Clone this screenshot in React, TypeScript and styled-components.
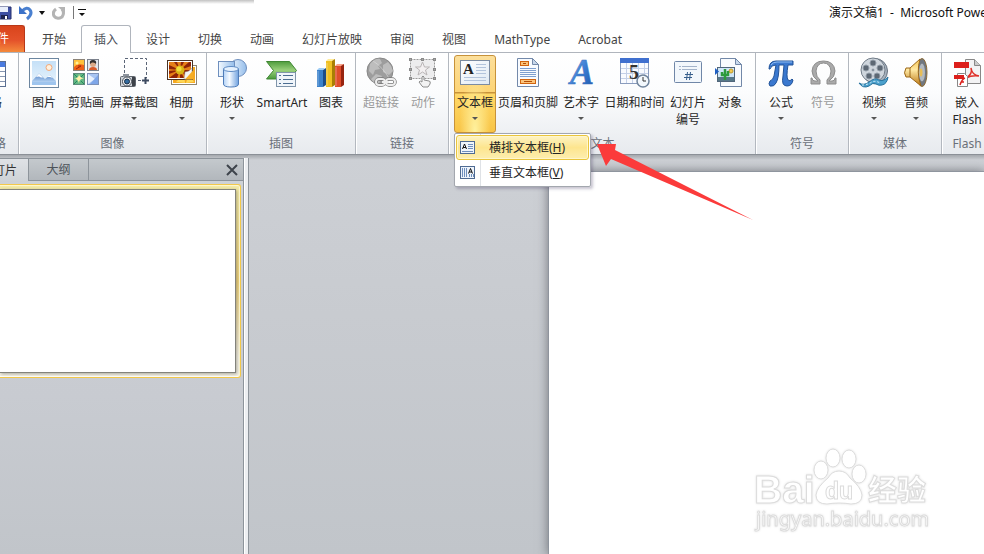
import React, { ReactNode } from "react";
import styled, { createGlobalStyle, css } from "styled-components";

const GlobalStyle = createGlobalStyle`
  * { box-sizing: border-box; }
  body {
    margin: 0;
    overflow: hidden;
    background: #fff;
    color: #262626;
    font-family: "Noto Sans", "Noto Sans CJK SC", sans-serif;
    font-size: 12px;
    line-height: 17px;
  }
  button {
    margin: 0;
    padding: 0;
    border: 0;
    background: none;
    color: inherit;
    font: inherit;
  }
  svg { display: block; flex: none; }
`;

const Window = styled.div`
  position: relative;
  display: flex;
  flex-direction: column;
  min-height: 100vh;
  overflow: hidden;
`;

/* ---------- title bar ---------- */

const TitleBar = styled.header`
  position: relative;
  display: flex;
  align-items: center;
  justify-content: space-between;
  height: 25px;
  background: #fff;
  overflow: hidden;
`;

const EdgeShade = styled.div`
  position: absolute;
  top: 0;
  left: 0;
  width: 254px;
  height: 4px;
  background: linear-gradient(#c2c2c2, #fff);
`;

const QuickAccess = styled.div`
  display: flex;
  align-items: center;
  height: 23px;
`;

const QuickButton = styled.button<{ $width: number }>`
  display: flex;
  justify-content: center;
  width: ${(p) => p.$width}px;
`;

const QuickDivider = styled.span`
  width: 1px;
  height: 13px;
  background: #777;
`;

const Title = styled.h1`
  flex: none;
  width: 155px;
  margin: 0;
  color: #111;
  font-size: 12px;
  font-weight: 400;
  white-space: pre;
`;

/* ---------- ribbon tabs ---------- */

const TabRow = styled.nav`
  display: flex;
  align-items: stretch;
  height: 28px;
  background: #fff;
  box-shadow: inset 0 -1px #b0b5bd;
`;

const FileTab = styled.button`
  width: 25px;
  margin-right: 3px;
  margin-bottom: 1px;
  padding-right: 15px;
  display: flex;
  justify-content: flex-end;
  border: 1px solid #b93818;
  border-left: 0;
  border-bottom: 0;
  border-radius: 0 3px 0 0;
  background: linear-gradient(#d9441c, #e4522a 55%, #f58a3c);
  color: #fff;
  line-height: 26px;
  white-space: nowrap;
`;

const RibbonTab = styled.button<{ $active?: boolean }>`
  flex: none;
  padding: 0 14px;
  color: #444;
  white-space: nowrap;
  ${(p) =>
    p.$active &&
    css`
      margin: 0 1px;
      padding: 0 12px;
      border: 1px solid #b0b5bd;
      border-bottom: 0;
      border-radius: 3px 3px 0 0;
      background: #fff;
      color: #4b4f58;
    `}
`;

/* ---------- ribbon body ---------- */

const Ribbon = styled.div`
  display: flex;
  height: 102px;
  border-bottom: 1px solid #8b9097;
  background: linear-gradient(#fff, #fbfcfd 40%, #e7eaee);
`;

const Group = styled.section<{ $indent?: number }>`
  flex: none;
  display: flex;
  flex-direction: column;
  justify-content: space-between;
  padding: 2px 4px;
  padding-left: ${(p) => p.$indent ?? 4}px;
  border-right: 1px solid #b3b8bf;
  box-shadow: 1px 0 #fff;
`;

const GroupItems = styled.div`
  display: flex;
  align-items: flex-start;
`;

const GroupName = styled.h2`
  margin: 0;
  color: #6a7079;
  font-size: 12px;
  font-weight: 400;
  text-align: center;
  white-space: nowrap;
`;

const ToolSlot = styled.div<{ $width: number }>`
  position: relative;
  flex: none;
  width: ${(p) => p.$width}px;
`;

const ToolButton = styled.button<{ $open?: boolean; $dim?: boolean }>`
  display: flex;
  flex-direction: column;
  align-items: center;
  width: 100%;
  height: 78px;
  padding-top: 2px;
  white-space: nowrap;
  color: ${(p) => (p.$dim ? "#9a9a9a" : "#262626")};
  ${(p) =>
    p.$open &&
    css`
      padding-top: 1px;
      border: 1px solid #c7923a;
      border-radius: 3px;
      background:
        radial-gradient(ellipse at 50% 100%, #fff2a0, transparent 55%),
        linear-gradient(#fcdf9b 0, #fdd475 36px, #c7923a 36px, #c7923a 37px, #ffd868 38px, #f8c445 100%);
    `}
`;

const ToolLabel = styled.span`
  display: block;
  margin-top: 5px;
  text-align: center;
  white-space: pre;
`;

const Caret = styled.span`
  margin-top: 6px;
  border: 3px solid transparent;
  border-top-color: #555;
  border-bottom: 0;
`;

/* ---------- drop-down menu ---------- */

const Menu = styled.div`
  position: absolute;
  z-index: 3;
  top: 78px;
  left: 0;
  width: 137px;
  padding: 1px;
  border: 1px solid #a3a7ae;
  border-radius: 2px;
  background: linear-gradient(90deg, #fff 25px, #dfe2e6 25px, #dfe2e6 26px, #fff 26px);
  box-shadow: 2px 2px 3px rgba(70, 60, 100, 0.3);
`;

const MenuItem = styled.button<{ $hot?: boolean }>`
  display: flex;
  align-items: center;
  gap: 13px;
  width: 100%;
  height: 25px;
  padding-left: 3px;
  border: 1px solid ${(p) => (p.$hot ? "#e9c53c" : "transparent")};
  border-radius: 3px;
  background: ${(p) =>
    p.$hot ? "linear-gradient(#fdf3c4, #fde58e 50%, #fdeeb0)" : "none"};
  box-shadow: ${(p) => (p.$hot ? "inset 0 0 0 1px #fff6cc" : "none")};
  white-space: nowrap;
`;

/* ---------- workspace ---------- */

const Workspace = styled.main`
  flex: 1;
  display: flex;
  align-items: stretch;
  background:
    linear-gradient(#a4a8ad, rgba(180, 184, 190, 0) 5px),
    linear-gradient(#cdd0d5, #c8cbd0 40%, #c1c5ca);
`;

const SlidePane = styled.aside`
  flex: none;
  width: 244px;
  margin-top: 3px;
  border: 1px solid #8d949b;
  border-left: 0;
  border-bottom: 0;
  background: linear-gradient(#cfd3d7, #c8cbd1 60%, #c1c5ca);
`;

const PaneTabs = styled.div`
  display: flex;
  height: 22px;
  border-bottom: 1px solid #8d949b;
  background: linear-gradient(#c4c9cd, #b2b7bc);
  color: #4d535a;
`;

const PaneTab = styled.button<{ $width: number; $active?: boolean }>`
  width: ${(p) => p.$width}px;
  border-right: 1px solid #8d949b;
  white-space: nowrap;
  ${(p) =>
    p.$active &&
    css`
      display: flex;
      align-items: center;
      justify-content: flex-end;
      margin-bottom: -1px;
      padding-right: 11px;
      background: linear-gradient(#dfe2e6, #cfd3d7);
      color: #333;
    `}
`;

const PaneClose = styled.button`
  margin-left: auto;
  width: 22px;
  display: flex;
  align-items: center;
  justify-content: center;
`;

const SelectedFrame = styled.div`
  margin: 3px 2px 0 0;
  padding: 4px 4px 4px 0;
  border: 1px solid #f3c94a;
  border-left: 0;
  border-radius: 0 3px 3px 0;
  background: linear-gradient(#f4eca8, #efd27a 50%, #f4f1e4 90%);
  box-shadow: inset -1px 0 #fdf6cf, inset 0 1px #fdf6cf, inset 0 -1px #fff;
`;

const Thumbnail = styled.div`
  height: 184px;
  border: 1px solid #83837c;
  border-left: 0;
  background: #fff;
  box-shadow: 1px 1px 3px rgba(80, 80, 70, 0.45);
`;

const Splitter = styled.div`
  flex: none;
  width: 5px;
  margin-top: 3px;
  border-right: 1px solid #8d949b;
  background: linear-gradient(90deg, #fff 1px, #eceef1 1px);
`;

const Canvas = styled.div`
  flex: 1;
  display: flex;
  padding: 17px 0 0 300px;
`;

const Slide = styled.div`
  flex: 1;
  background: #fff;
  box-shadow: 0 0 0 1px rgba(140, 146, 156, 0.8), 0 0 10px 1px rgba(60, 64, 70, 0.6);
`;

const PointerArrow = styled.svg`
  position: absolute;
  z-index: 4;
  left: 594px;
  top: 138px;
`;

const Watermark = styled.svg`
  position: absolute;
  right: 56px;
  bottom: 18px;
  filter: drop-shadow(0 0 1px rgba(0, 0, 0, 0.12));
`;

/* ---------- icons ---------- */

const Icon = ({ children, w = 32, h = 32 }: { children: ReactNode; w?: number; h?: number }) => (
  <svg width={w} height={h} viewBox={`0 0 ${w} ${h}`} aria-hidden="true">
    {children}
  </svg>
);

const TableIcon = () => (
  <Icon>
    <rect x="3.500" y="4.500" width="28" height="25" fill="#fff" stroke="#5b6f92" />
    <rect x="4" y="5" width="27" height="5" fill="#4a7be0" />
    <path d="M4 14.500h27M4 19.500h27M4 24.500h27M13.500 10v19M24.500 10v19" stroke="#8796b0" />
  </Icon>
);

const PictureIcon = () => (
  <Icon>
    <defs>
      <linearGradient id="picSky" x2="0" y2="1">
        <stop stopColor="#c5e0f7" />
        <stop offset="1" stopColor="#eaf5fd" />
      </linearGradient>
      <linearGradient id="picHill" x2="0" y2="1">
        <stop stopColor="#4d7fc4" />
        <stop offset="1" stopColor="#b4d2f2" />
      </linearGradient>
    </defs>
    <rect x="1.500" y="1.500" width="29" height="29" fill="#fff" stroke="#6c86a0" />
    <rect x="4" y="4" width="24" height="24" fill="url(#picSky)" />
    <circle cx="21" cy="10.500" r="3" fill="#fff1de" stroke="#f2a878" />
    <path d="M4 24l7-7.500 6 5.500 5-4 6 6v1H4z" fill="url(#picHill)" />
    <path d="M8 20l3-3.500 4 4-2 0-2-1zM19 20l3-2 3 3-3-1z" fill="#fff" />
    <rect x="4" y="25" width="24" height="3" fill="#9fc5ee" />
  </Icon>
);

const ClipArtIcon = () => (
  <Icon>
    <rect x="3.500" y="2.500" width="11" height="11" fill="#ffc13b" stroke="#8b8378" />
    <path d="M4 10q3-4 10-2v5H4z" fill="#ef5f16" />
    <circle cx="7" cy="6" r="1.500" fill="#fff09a" />
    <path d="M6 12l5-3M8 9h3" stroke="#a12b0a" />
    <rect x="17.500" y="2.500" width="11" height="11" fill="#e3e7ee" stroke="#7b818c" />
    <circle cx="23" cy="7" r="3" fill="#dba987" />
    <path d="M20 7q-1-4 3-4t3 4q-1-2-4-1.500z" fill="#34302f" />
    <path d="M19 13q0-3 4-3t4 3z" fill="#d95b2a" />
    <rect x="3.500" y="16.500" width="11" height="11" fill="#62b784" stroke="#5f8c7c" />
    <path d="M9 16.500q0 4 5 5-5 0-5 5-1-5-5-5 5 0 5-5z" fill="#fff2a8" />
    <path d="M4 17l3 3M14 17l-3 3M4 27l3-3M14 27l-3-3" stroke="#26895c" />
    <rect x="17.500" y="16.500" width="11" height="11" fill="#a9c5f2" stroke="#7d92b8" />
    <path d="M18 17l7 5-7 5z" fill="#fff" opacity=".75" />
    <path d="M28 18l-8 9h8z" fill="#6c98e4" opacity=".7" />
  </Icon>
);

const ScreenshotIcon = () => (
  <Icon>
    <path d="M6.500 16V1.500h22V21M20 23.500h5" fill="none" stroke="#5b6577" strokeDasharray="3 2" />
    <path d="M24 23.500h7M27.500 20v7" stroke="#3c4a60" strokeWidth="2" />
    <rect x="2.500" y="19.500" width="15" height="10" rx="1" fill="#cdd2d8" stroke="#5e646c" />
    <rect x="5" y="17" width="6" height="3" fill="#8c939c" />
    <rect x="14" y="20" width="3" height="9" fill="#3c4148" />
    <circle cx="9" cy="24.500" r="4.500" fill="#f4f6f8" stroke="#454b54" />
    <circle cx="9" cy="24.500" r="2.500" fill="#336b9f" stroke="#182b40" />
  </Icon>
);

const AlbumIcon = () => (
  <Icon>
    <rect x="5.500" y="8.500" width="25" height="19" fill="#fff" stroke="#8d8574" />
    <rect x="7" y="10" width="22" height="16" fill="#f5a820" />
    <path d="M10 25l8-8 1 9zM20 26l3-10 5 9z" fill="#fcd757" />
    <rect x="1.500" y="3.500" width="25" height="19" fill="#fff" stroke="#4a3325" />
    <rect x="3" y="5" width="22" height="16" fill="#8e2408" />
    <path
      d="M14 13L3 8V5h5zM14 13L11 5h4zM14 13l4-8h5zM14 13l11-4v4zM14 13l4 8h4zM14 13l-3 8h3zM14 13L3 21v-4zM14 13L3 12v2z"
      fill="#e57f18"
    />
    <circle cx="14" cy="13" r="4.500" fill="#d9b416" />
    <circle cx="13" cy="12" r="2.500" fill="#efdd3c" />
    <path d="M18 22q1-5 1-7 4 0 7-4v11z" fill="#f3f4f6" stroke="#a0a0a0" strokeWidth=".5" />
    <path d="M19 22.500l8-9v9z" fill="#f6ad25" />
  </Icon>
);

const ShapesIcon = () => (
  <Icon>
    <defs>
      <linearGradient id="shapeFill">
        <stop stopColor="#f3f9ff" />
        <stop offset="1" stopColor="#94bdea" />
      </linearGradient>
      <linearGradient id="shapeCan">
        <stop stopColor="#b4d3f7" />
        <stop offset=".4" stopColor="#f5faff" />
        <stop offset="1" stopColor="#6fa1df" />
      </linearGradient>
    </defs>
    <circle cx="22" cy="11" r="8.500" fill="url(#shapeFill)" stroke="#6e8fbe" />
    <rect x="2.500" y="4.500" width="16" height="15" fill="url(#shapeFill)" stroke="#6e8fbe" />
    <path d="M7.500 12v15q0 3 7.500 3t7.500-3V12z" fill="url(#shapeCan)" stroke="#4f7dba" />
    <ellipse cx="15" cy="12" rx="7.500" ry="2.500" fill="#e5f1fe" stroke="#5f8cc5" />
  </Icon>
);

const SmartArtIcon = () => (
  <Icon>
    <defs>
      <linearGradient id="saGreen" x2="0" y2="1">
        <stop stopColor="#4f9c3d" />
        <stop offset=".5" stopColor="#9ad07c" />
        <stop offset="1" stopColor="#4a9a3c" />
      </linearGradient>
    </defs>
    <path d="M.5 4.500h23l7 9-7 8.500H.5l7-8.500z" fill="url(#saGreen)" stroke="#3f8733" />
    <rect x="10.500" y="15.500" width="19" height="14" fill="#f0f5fa" stroke="#8095aa" />
    <path d="M17 18.500h10M17 22.500h10M17 26.500h10" stroke="#4b6d91" />
    <path d="M13 18.500h2M13 22.500h2M13 26.500h2" stroke="#4b6d91" />
  </Icon>
);

const ChartIcon = () => (
  <Icon>
    <path d="M2 13l2-2h6l-2 2z" fill="#9fcdf5" />
    <path d="M2 13h6v17H2z" fill="#3c82cb" />
    <path d="M8 13l3-2v17l-3 2z" fill="#1d4d88" />
    <path d="M11 4l2-2h7l-2 2z" fill="#ffeb9a" />
    <path d="M11 4h6v26h-6z" fill="#f0c023" />
    <path d="M17 4l3-2v26l-3 2z" fill="#a97f05" />
    <path d="M20 9l2-2h7l-2 2z" fill="#f8a58c" />
    <path d="M20 9h6v21h-6z" fill="#e04d2b" />
    <path d="M26 9l3-2v21l-3 2z" fill="#972410" />
    <path d="M3 14v15M12 6v23M21 10v19" stroke="#fff" opacity=".35" />
  </Icon>
);

const LinkIcon = () => (
  <Icon>
    <circle cx="15" cy="14" r="13" fill="#9d9d9d" stroke="#888" />
    <path d="M5 7q5-6 10-5l2 4-4 3 2 3-5 1-2 5-4-4zM18 8l5-3q4 4 5 9l-4 4-6-3zM11 17l6 2-3 8q-6-1-8-5z" fill="#bdbdbd" />
    <path d="M8 4q10 6 17 19" fill="none" stroke="#e0e0e0" opacity=".6" />
    <g fill="none" stroke="#777" strokeWidth="3.500">
      <rect x="11" y="22" width="9" height="6" rx="3" />
      <rect x="21" y="22" width="9" height="6" rx="3" />
    </g>
    <g fill="none" stroke="#eee" strokeWidth="2">
      <rect x="11" y="22" width="9" height="6" rx="3" />
      <rect x="21" y="22" width="9" height="6" rx="3" />
      <path d="M17 25h7" />
    </g>
  </Icon>
);

const ActionIcon = () => (
  <Icon>
    <rect x="3.500" y="2.500" width="24" height="19" fill="#ededee" stroke="#9a9a9a" strokeDasharray="2 1" />
    <path d="M15.500 5l2 5h5l-4 3 1.500 5-4.500-3-4.500 3 1.500-5-4-3h5z" fill="#f3f0f1" stroke="#b9b5b6" />
    <g fill="#a9a9a9" stroke="#8a8a8a">
      <rect x="2.500" y="1.500" width="2" height="2" />
      <rect x="14.500" y="1.500" width="2" height="2" />
      <rect x="26.500" y="1.500" width="2" height="2" />
      <rect x="2.500" y="11.500" width="2" height="2" />
      <rect x="26.500" y="11.500" width="2" height="2" />
      <rect x="2.500" y="20.500" width="2" height="2" />
      <rect x="26.500" y="20.500" width="2" height="2" />
    </g>
    <path d="M15 29l-3-4q1-2 3 0v-5q1-2 2 0v3l5 1q2 0 1 3l-2 3h-5z" fill="#f3f3f3" stroke="#8d8d8d" />
  </Icon>
);

const TextBoxIcon = () => (
  <Icon>
    <defs>
      <linearGradient id="tbFill" x2="1" y2="1">
        <stop stopColor="#fff" />
        <stop offset="1" stopColor="#dfe9f4" />
      </linearGradient>
    </defs>
    <rect x="1.500" y="3.500" width="29" height="24" fill="url(#tbFill)" stroke="#7c8ca2" />
    <path d="M17 7.500h10M17 10.500h10M17 13.500h10M17 16.500h10M5 20.500h22M5 23.500h22" stroke="#b3c4dc" />
    <text x="4" y="17" fontFamily="Liberation Serif, serif" fontSize="15" fontWeight="700" fill="#222">
      A
    </text>
  </Icon>
);

const HeaderFooterIcon = () => (
  <Icon>
    <path d="M5.500 1.500h15l6 6v22h-21z" fill="#f8fbff" stroke="#7389aa" />
    <path d="M20.500 1.500v6h6z" fill="#c6d6ea" stroke="#7389aa" />
    <path d="M8 11.500h16M8 13.500h16M8 15.500h16M8 17.500h16M8 19.500h16" stroke="#7fa0d0" />
    <rect x="8.500" y="4.500" width="8" height="4" fill="#fbc47c" stroke="#d1640f" />
    <rect x="8.500" y="22.500" width="15" height="4" fill="#fbc47c" stroke="#d1640f" />
    <path d="M11 6.500h3M12 24.500h8" stroke="#b34d08" />
  </Icon>
);

const WordArtIcon = () => (
  <Icon>
    <defs>
      <linearGradient id="waBlue" x2="1" y2="1">
        <stop stopColor="#8ab9ee" />
        <stop offset=".5" stopColor="#3c7fd5" />
        <stop offset="1" stopColor="#1c52a5" />
      </linearGradient>
    </defs>
    <text
      x="5"
      y="27"
      fontFamily="Liberation Serif, serif"
      fontSize="36"
      fontWeight="700"
      fontStyle="italic"
      fill="url(#waBlue)"
      stroke="#3b73bd"
      strokeWidth=".5"
    >
      A
    </text>
  </Icon>
);

const DateTimeIcon = () => (
  <Icon>
    <rect x="1.500" y="1.500" width="28" height="25" fill="#f9fbff" stroke="#8a9cbd" />
    <rect x="1" y="1" width="29" height="5" fill="#4070cf" />
    <path d="M2 11.500h27M2 16.500h27M2 21.500h27M7.500 6v20M13.500 6v20M19.500 6v20M25.500 6v20" stroke="#c5d1e8" />
    <text x="10" y="22" fontFamily="Liberation Serif, serif" fontSize="20" fontWeight="700" fill="#333">
      5
    </text>
    <circle cx="24" cy="24" r="6" fill="#f3f8fc" stroke="#70849c" strokeWidth="1.500" />
    <path d="M24 20v4h3" fill="none" stroke="#333" />
  </Icon>
);

const SlideNumberIcon = () => (
  <Icon>
    <rect x="2.500" y="4.500" width="27" height="21" rx="1" fill="#f2f7fc" stroke="#7087a8" />
    <path d="M7 9.500h2M7 12.500h2M10 9.500h15M10 12.500h15" stroke="#a3b3ca" />
    <path d="M15.500 15l-1 8M18.500 15l-1 8M13 17.500h8M12 20.500h8" stroke="#375f8c" />
  </Icon>
);

const ObjectIcon = () => (
  <Icon>
    <path d="M6.500 1.500h15l6 6v22h-21z" fill="#f9fbfe" stroke="#7288a8" />
    <path d="M21.500 1.500v6h6z" fill="#c8d8eb" stroke="#7288a8" />
    <rect x="3.500" y="10.500" width="17" height="14" fill="#cfe6f8" stroke="#51667b" />
    <rect x="4" y="20" width="16" height="4" fill="#577889" />
    <circle cx="17" cy="14" r="2" fill="#f4cb52" stroke="#c29a27" />
    <path d="M11 23V12M8 15v3h6v-4" stroke="#2d9a3d" strokeWidth="2.500" fill="none" />
    <path d="M1 11l4 3.500L1 18z" fill="#1f5ec2" />
  </Icon>
);

const PiIcon = () => (
  <Icon>
    <path
      d="M4 12q0-8 7-8h17v4h-5q-2 12 0 15 2 2 4-1l1 1q-1 6-6 6-6 0-4-10l1-11h-5q0 13-3 18-2 4-6 3-2-2 0-5 3-1 4-5l2-11Q6 8 5 12z"
      fill="#3a78cf"
      stroke="#235499"
    />
    <path d="M6 8q2-3 6-3h15" fill="none" stroke="#8ebcf3" />
  </Icon>
);

const OmegaIcon = () => (
  <Icon>
    <path
      d="M4 27v-6h1q0 3 3 3h3Q5 20 5 14 6 4 16.500 4T28 14q0 6-6 10h3q3 0 3-3h1v6h-9v-4q4-3 4-9-1-8-7.500-8T9 14q0 6 4 9v4z"
      fill="#aaa"
      stroke="#8d8d8d"
    />
  </Icon>
);

const VideoIcon = () => (
  <Icon>
    <circle cx="17" cy="14" r="12.500" fill="#a5b0bc" stroke="#687380" />
    <circle cx="15" cy="13" r="12" fill="#cfd6dd" stroke="#727d89" />
    <g fill="#5d6874" stroke="#929ca7">
      <circle cx="15" cy="6" r="3" />
      <circle cx="22" cy="11" r="3" />
      <circle cx="19" cy="19" r="3" />
      <circle cx="11" cy="19" r="3" />
      <circle cx="8" cy="11" r="3" />
      <circle cx="15" cy="13" r="1" />
    </g>
    <path d="M1 26q5 3 10-1 6-5 10-2 4 2 9-3-1 7-6 8-3 1-6-1t-7 2q-6 3-10-3z" fill="#4ba0cc" stroke="#28739e" />
    <path d="M4 28q5 0 9-2.500t9 .5" fill="none" stroke="#d7f0fb" strokeDasharray="2 2" />
  </Icon>
);

const AudioIcon = () => (
  <Icon>
    <defs>
      <linearGradient id="horn" x2="0" y2="1">
        <stop stopColor="#f6c553" />
        <stop offset=".4" stopColor="#ffe9a3" />
        <stop offset="1" stopColor="#b97410" />
      </linearGradient>
    </defs>
    <ellipse cx="22" cy="15.500" rx="5" ry="14" fill="#707780" stroke="#8b6a35" />
    <path d="M6 11h4L20 2q-4 13 1 27l-11-9H6q-3-4 0-9z" fill="url(#horn)" stroke="#9c681a" />
    <path d="M10 11v9" stroke="#9c681a" />
    <ellipse cx="22" cy="15.500" rx="3" ry="9" fill="#b2b9c0" />
    <ellipse cx="21" cy="15.500" rx="1.500" ry="4" fill="#e7bd57" />
  </Icon>
);

const FlashIcon = () => (
  <Icon>
    <path d="M14.500 2.500h9l6 6v18h-15z" fill="#f3f3f4" stroke="#888" />
    <path d="M23.500 2.500v6h6" fill="#ccc" stroke="#888" />
    <rect x="3" y="5" width="15" height="6" fill="#dc1f1b" />
    <path d="M15 21q7-4 5-10 1 7 8 8-7-1-13 2z" fill="none" stroke="#e03028" strokeWidth="1.500" />
    <path d="M6.500 16.500h7l3 3v10h-10z" fill="#fff" stroke="#888" />
    <rect x="3" y="18" width="10" height="4" fill="#dc1f1b" />
    <path d="M14 21q-3 1-5 7M10 25h3" stroke="#dc1f1b" strokeWidth="1.500" fill="none" />
  </Icon>
);

const MiniTextIcon = ({ vertical }: { vertical?: boolean }) => (
  <Icon w={16} h={16}>
    <rect x=".5" y="1.500" width="14" height="12" fill="#eef4fb" stroke="#4f6b92" />
    {vertical ? (
      <path d="M2.500 3v9M4.500 3v9M6.500 3v9M9.500 9v3M11.500 9v3M13.500 9v3" stroke="#6f8fbd" />
    ) : (
      <path d="M8 4.500h5M8 6.500h5M8 8.500h5M2 11.500h11" stroke="#6f8fbd" />
    )}
    <path d={vertical ? "M8.500 8.500l2-5 2 5M9 7h3" : "M2.500 9l2-5 2 5M3 7.500h3"} fill="none" stroke="#111" />
  </Icon>
);

/* ---------- data ---------- */

type Tool = {
  label: string;
  width: number;
  icon: ReactNode;
  caret?: boolean;
  dim?: boolean;
  menu?: boolean;
};

const groups: { name: string; indent?: number; tools: Tool[] }[] = [
  {
    name: "图像",
    tools: [
      { label: "图片", width: 42, icon: <PictureIcon /> },
      { label: "剪贴画", width: 42, icon: <ClipArtIcon /> },
      { label: "屏幕截图", width: 54, icon: <ScreenshotIcon />, caret: true },
      { label: "相册", width: 41, icon: <AlbumIcon />, caret: true },
    ],
  },
  {
    name: "插图",
    tools: [
      { label: "形状", width: 42, icon: <ShapesIcon />, caret: true },
      { label: "SmartArt", width: 58, icon: <SmartArtIcon /> },
      { label: "图表", width: 40, icon: <ChartIcon /> },
    ],
  },
  {
    name: "链接",
    tools: [
      { label: "超链接", width: 42, icon: <LinkIcon />, dim: true },
      { label: "动作", width: 42, icon: <ActionIcon />, dim: true },
    ],
  },
  {
    name: "文本",
    indent: 5,
    tools: [
      { label: "文本框", width: 42, icon: <TextBoxIcon />, caret: true, menu: true },
      { label: "页眉和页脚", width: 64, icon: <HeaderFooterIcon /> },
      { label: "艺术字", width: 42, icon: <WordArtIcon />, caret: true },
      { label: "日期和时间", width: 65, icon: <DateTimeIcon /> },
      { label: "幻灯片\n编号", width: 42, icon: <SlideNumberIcon /> },
      { label: "对象", width: 42, icon: <ObjectIcon /> },
    ],
  },
  {
    name: "符号",
    tools: [
      { label: "公式", width: 42, icon: <PiIcon />, caret: true },
      { label: "符号", width: 42, icon: <OmegaIcon />, dim: true },
    ],
  },
  {
    name: "媒体",
    tools: [
      { label: "视频", width: 42, icon: <VideoIcon />, caret: true },
      { label: "音频", width: 42, icon: <AudioIcon />, caret: true },
    ],
  },
  { name: "Flash", tools: [{ label: "嵌入\nFlash", width: 42, icon: <FlashIcon /> }] },
];

const ribbonTabs = ["开始", "插入", "设计", "切换", "动画", "幻灯片放映", "审阅", "视图", "MathType", "Acrobat"];

const ClippedGroup = styled(Group)`
  width: 19px;
  overflow: hidden;
  align-items: flex-end;
  padding-right: 12px;
`;

const TextBoxMenu = () => (
  <Menu role="menu">
    <MenuItem role="menuitem" $hot>
      <MiniTextIcon />
      <span>
        横排文本框(<u>H</u>)
      </span>
    </MenuItem>
    <MenuItem role="menuitem">
      <MiniTextIcon vertical />
      <span>
        垂直文本框(<u>V</u>)
      </span>
    </MenuItem>
  </Menu>
);

export default function App() {
  return (
    <Window>
      <GlobalStyle />
      <TitleBar>
        <EdgeShade />
        <QuickAccess>
          <QuickButton $width={12} aria-label="保存">
            <Icon w={12} h={16}>
              <path d="M-4 2h15v12H-4z" fill="#3d4fa3" stroke="#26316f" />
              <path d="M-2 2h10v5H-2z" fill="#e8eefb" />
              <path d="M1 10h7v4H1z" fill="#1d2450" />
              <path d="M5 11h2v3H5z" fill="#fff" />
            </Icon>
          </QuickButton>
          <QuickButton $width={27} aria-label="撤消">
            <Icon w={16} h={16}>
              <path d="M4 6q5-5 8-1 3 4-3 9" fill="none" stroke="#4a80d0" strokeWidth="3" />
              <path d="M1 1v8h8z" fill="#3c72c8" />
            </Icon>
          </QuickButton>
          <Icon w={6} h={4}>
            <path d="M0 0h6L3 4z" fill="#111" />
          </Icon>
          <QuickButton $width={28} aria-label="重复">
            <Icon w={14} h={16}>
              <path d="M4 4q-4 3-2 7 3 4 8 1 3-4 0-8" fill="none" stroke="#b4b4b4" strokeWidth="3" />
              <path d="M6 2h7v6z" fill="#b4b4b4" />
            </Icon>
          </QuickButton>
          <QuickDivider />
          <QuickButton $width={16} aria-label="自定义快速访问工具栏">
            <Icon w={8} h={8}>
              <path d="M0 0h8v1H0zM1 4h6L4 7z" fill="#111" />
            </Icon>
          </QuickButton>
        </QuickAccess>
        <Title>演示文稿1  -  Microsoft PowerPoint</Title>
      </TitleBar>

      <TabRow>
        <FileTab>文件</FileTab>
        {ribbonTabs.map((name) => (
          <RibbonTab key={name} $active={name === "插入"}>
            {name}
          </RibbonTab>
        ))}
      </TabRow>

      <Ribbon>
        <ClippedGroup>
          <ToolSlot $width={32}>
            <ToolButton>
              <TableIcon />
              <ToolLabel>表格</ToolLabel>
            </ToolButton>
          </ToolSlot>
          <GroupName>表格</GroupName>
        </ClippedGroup>
        {groups.map((group) => (
          <Group key={group.name} $indent={group.indent}>
            <GroupItems>
              {group.tools.map((tool) => (
                <ToolSlot key={tool.label} $width={tool.width}>
                  <ToolButton $open={tool.menu} $dim={tool.dim} disabled={tool.dim}>
                    {tool.icon}
                    <ToolLabel>{tool.label}</ToolLabel>
                    {tool.caret && <Caret />}
                  </ToolButton>
                  {tool.menu && <TextBoxMenu />}
                </ToolSlot>
              ))}
            </GroupItems>
            <GroupName>{group.name}</GroupName>
          </Group>
        ))}
      </Ribbon>

      <Workspace>
        <SlidePane>
          <PaneTabs>
            <PaneTab $width={29} $active>
              幻灯片
            </PaneTab>
            <PaneTab $width={60}>大纲</PaneTab>
            <PaneClose aria-label="关闭">
              <Icon w={12} h={12}>
                <path d="M1 1l10 10M11 1L1 11" stroke="#3e444b" strokeWidth="2" />
              </Icon>
            </PaneClose>
          </PaneTabs>
          <SelectedFrame>
            <Thumbnail />
          </SelectedFrame>
        </SlidePane>
        <Splitter />
        <Canvas>
          <Slide />
        </Canvas>
      </Workspace>

      <PointerArrow width="160" height="84" viewBox="0 0 160 84" aria-hidden="true">
        <path d="M3 6l19 0-1 6 138 70L17 21l-5 7z" fill="#fb3b3b" />
      </PointerArrow>

      <Watermark width="186" height="92" viewBox="0 0 186 92" role="img" aria-label="Baidu 经验">
        <g fill="#fff" stroke="#dcdcdc" strokeWidth="1">
          <ellipse cx="79" cy="26" rx="7" ry="9" />
          <ellipse cx="91" cy="14" rx="7" ry="9" />
          <ellipse cx="107" cy="15" rx="7" ry="9" />
          <ellipse cx="117" cy="30" rx="7" ry="9" />
          <path d="M97 27q7 0 11 7 11 9 12 17 0 9-11 9-6-1-12-1t-12 1q-11 0-11-9 1-8 12-17 4-7 11-7z" />
          <g fontFamily="Liberation Sans, Noto Sans CJK SC, sans-serif" fontWeight="700">
            <text x="12" y="59" fontSize="39">
              Bai
            </text>
            <text x="83" y="55" fontSize="23">
              du
            </text>
            <text x="126" y="57" fontSize="29">
              经验
            </text>
          </g>
          <text x="14" y="82" fontFamily="Noto Sans, sans-serif" fontSize="20">
            jingyan.baidu.com
          </text>
        </g>
      </Watermark>
    </Window>
  );
}
